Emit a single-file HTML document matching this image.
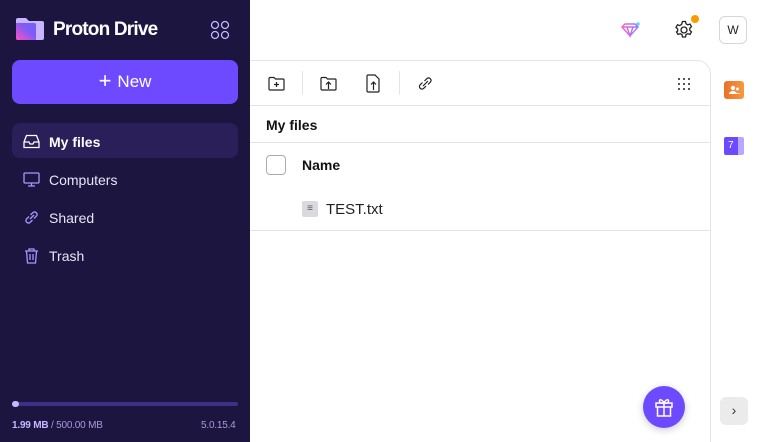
<!DOCTYPE html>
<html style="width:757px;height:442px;overflow:hidden"><head><meta charset="utf-8"><style>
*{margin:0;padding:0;box-sizing:border-box}
body{width:757px;height:442px;overflow:hidden;font-family:"Liberation Sans",sans-serif;background:#fff;position:relative}
.sb{position:absolute;left:0;top:0;width:250px;height:442px;background:#1c1540;color:#fff}
.abs{position:absolute}
.nav{position:absolute;left:12px;width:226px;height:35px;border-radius:8px;display:flex;align-items:center;font-size:14px;color:#e8e6f5;padding-top:2px}
.nav svg{margin-left:11px;margin-right:9px}
.tb svg{position:absolute}
</style></head><body>
<div class="sb">
  <svg class="abs" style="left:16px;top:18px" width="28" height="22" viewBox="0 0 28 22">
    <defs><linearGradient id="g1" x1="0" y1="1" x2="1" y2="0"><stop offset="0" stop-color="#ff50c3"/><stop offset="0.6" stop-color="#7b5cf6"/></linearGradient></defs>
    <path d="M2 0h8l3 3h13a2 2 0 0 1 2 2v15a2 2 0 0 1-2 2H2a2 2 0 0 1-2-2V2a2 2 0 0 1 2-2z" fill="#c8b4ff"/>
    <path d="M0 5h18a2 2 0 0 1 2 2v15H2a2 2 0 0 1-2-2z" fill="url(#g1)"/>
  </svg>
  <div class="abs" style="left:53px;top:19px;font-size:19px;font-weight:bold;letter-spacing:-0.8px;color:#fff">Proton Drive</div>
  <svg class="abs" style="left:210px;top:20px" width="20" height="20" viewBox="0 0 20 20" fill="none" stroke="#c6b8ff" stroke-width="1.3"><circle cx="5" cy="5" r="3.5"/><circle cx="15" cy="5" r="3.5"/><circle cx="5" cy="15" r="3.5"/><circle cx="15" cy="15" r="3.5"/></svg>
  <div class="abs" style="left:12px;top:60px;width:226px;height:44px;background:#6d4aff;border-radius:8px;display:flex;align-items:center;justify-content:center;font-size:17px;color:#fff"><span style="font-size:22px;font-weight:300;margin-right:6px;margin-top:-3px">+</span>New</div>
  <div class="nav" style="top:123px;background:#2b1f5a;font-weight:bold;color:#fff"><svg width="17" height="15" viewBox="0 0 17 15" fill="none" stroke="#fff" stroke-width="1.3"><path d="M1 8l2.5-6.5h10L16 8v5.5H1z M1 8h5l1 2h3l1-2h5"/></svg>My files</div>
  <div class="nav" style="top:161px"><svg width="17" height="15" viewBox="0 0 17 15" fill="none" stroke="#a996ff" stroke-width="1.3"><rect x="1" y="1" width="15" height="10" rx="1"/><path d="M8.5 11v3M5 14h7"/></svg>Computers</div>
  <div class="nav" style="top:199px"><svg width="17" height="15" viewBox="0 0 17 15" fill="none" stroke="#a996ff" stroke-width="1.3"><path d="M7 9l4-4M6 6.5L3.5 9a2.5 2.5 0 0 0 3.5 3.5L9.5 10M11 8.5L13.5 6A2.5 2.5 0 0 0 10 2.5L7.5 5"/></svg>Shared</div>
  <div class="nav" style="top:237px"><svg width="17" height="16" viewBox="0 0 17 16" fill="none" stroke="#a996ff" stroke-width="1.3"><path d="M2 3h13M6 3V1h5v2M3.5 3l1 12h8l1-12M7 6v6M10 6v6"/></svg>Trash</div>
  <div class="abs" style="left:12px;top:402px;width:226px;height:4px;border-radius:2px;background:#3f2f86"></div>
  <div class="abs" style="left:12px;top:401px;width:7px;height:6px;border-radius:3px;background:#c6b8ff"></div>
  <div class="abs" style="left:12px;top:420px;font-size:10px;color:#a99ad8;letter-spacing:-0.2px"><b style="color:#c6b8ff">1.99 MB</b> / 500.00 MB</div>
  <div class="abs" style="left:201px;top:420px;font-size:10px;color:#a99ad8;letter-spacing:-0.2px">5.0.15.4</div>
</div>
<svg class="abs" style="left:620px;top:22px" width="22" height="16" viewBox="0 0 22 16" fill="none"><defs><linearGradient id="g2" x1="0" y1="0" x2="1" y2="0"><stop offset="0" stop-color="#ff5fc7"/><stop offset="1" stop-color="#8a7cff"/></linearGradient></defs><path d="M2 5l3-3h10l3 3-8 9z M2 5h16 M7 5l3 9 3-9" stroke="url(#g2)" stroke-width="1.4"/><path d="M18 0v4M16 2h4" stroke="#4fc3ff" stroke-width="1.2"/></svg>
<svg class="abs" style="left:674px;top:20px" width="20" height="20" viewBox="0 0 20 20" fill="none" stroke="#222" stroke-width="1.3"><circle cx="10" cy="10" r="3"/><path d="M8.5 1.5h3l.5 2.3 1.8 1 2.2-.8 1.5 2.6-1.7 1.6v2.1l1.7 1.6-1.5 2.6-2.2-.8-1.8 1-.5 2.3h-3l-.5-2.3-1.8-1-2.2.8-1.5-2.6L3.7 11V9L2 7.4l1.5-2.6 2.2.8 1.8-1z"/></svg>
<div class="abs" style="left:691px;top:15px;width:8px;height:8px;border-radius:50%;background:#ff9900"></div>
<div class="abs" style="left:719px;top:16px;width:28px;height:28px;border:1px solid #d6d6d6;border-radius:6px;font-size:12px;display:flex;align-items:center;justify-content:center;color:#222">W</div>
<div class="abs" style="left:250px;top:60px;width:461px;height:382px;border-top:1px solid #e5e5e5;border-right:1px solid #e5e5e5;border-top-right-radius:14px"></div>
<div class="tb">
<svg style="left:268px;top:76px" width="17" height="15" viewBox="0 0 17 15" fill="none" stroke="#222" stroke-width="1.2"><path d="M1 2.5a1 1 0 0 1 1-1h4l1.5 1.5H15a1 1 0 0 1 1 1V13a1 1 0 0 1-1 1H2a1 1 0 0 1-1-1z M8.5 6v5M6 8.5h5"/></svg>
<div class="abs" style="left:302px;top:71px;width:1px;height:24px;background:#e5e5e5"></div>
<svg style="left:320px;top:76px" width="17" height="15" viewBox="0 0 17 15" fill="none" stroke="#222" stroke-width="1.2"><path d="M1 2.5a1 1 0 0 1 1-1h4l1.5 1.5H15a1 1 0 0 1 1 1V13a1 1 0 0 1-1 1H2a1 1 0 0 1-1-1z M8.5 13V6M6 8.5l2.5-2.5 2.5 2.5"/></svg>
<svg style="left:366px;top:74px" width="15" height="19" viewBox="0 0 15 19" fill="none" stroke="#222" stroke-width="1.2"><path d="M1 2a1 1 0 0 1 1-1h7l4 4v12a1 1 0 0 1-1 1H2a1 1 0 0 1-1-1z M7.5 16V8M5 10.5l2.5-2.5 2.5 2.5"/></svg>
<div class="abs" style="left:399px;top:71px;width:1px;height:24px;background:#e5e5e5"></div>
<svg style="left:417px;top:75px" width="17" height="17" viewBox="0 0 17 17" fill="none" stroke="#222" stroke-width="1.2"><path d="M6 11l5-5M5.5 7.5L3 10a2.5 2.5 0 0 0 3.5 3.5L9 11M11 9.5L13.5 7A2.5 2.5 0 0 0 10 3.5L7.5 6"/></svg>
<svg style="left:677px;top:77px" width="14" height="14" viewBox="0 0 14 14" fill="#222"><circle cx="2" cy="2" r="1"/><circle cx="7" cy="2" r="1"/><circle cx="12" cy="2" r="1"/><circle cx="2" cy="7" r="1"/><circle cx="7" cy="7" r="1"/><circle cx="12" cy="7" r="1"/><circle cx="2" cy="12" r="1"/><circle cx="7" cy="12" r="1"/><circle cx="12" cy="12" r="1"/></svg>
</div>
<div class="abs" style="left:250px;top:105px;width:460px;height:1px;background:#e5e5e5"></div>
<div class="abs" style="left:266px;top:117px;font-size:14px;font-weight:bold;color:#111">My files</div>
<div class="abs" style="left:250px;top:142px;width:460px;height:1px;background:#e5e5e5"></div>
<div class="abs" style="left:266px;top:155px;width:20px;height:20px;border:1px solid #aaa;border-radius:4px"></div>
<div class="abs" style="left:302px;top:157px;font-size:14px;font-weight:bold;color:#111">Name</div>
<div class="abs" style="left:302px;top:201px;width:16px;height:16px;background:#dadade;border-radius:2px;font-size:10px;color:#555;text-align:center;line-height:16px">≡</div>
<div class="abs" style="left:326px;top:201px;font-size:15px;color:#222">TEST.txt</div>
<div class="abs" style="left:250px;top:230px;width:460px;height:1px;background:#e5e5e5"></div>
<div class="abs" style="left:724px;top:81px;width:20px;height:18px;border-radius:3px;background:linear-gradient(90deg,#e8702a,#f79a3e)"><svg width="20" height="18" viewBox="0 0 20 18" fill="#fff"><circle cx="9" cy="7" r="2.2"/><path d="M5 13a4 3 0 0 1 8 0z"/><circle cx="13.5" cy="8" r="1.5"/><path d="M12 13a3 2.5 0 0 1 4.5 0z"/></svg></div>
<div class="abs" style="left:724px;top:137px;width:20px;height:18px;border-radius:2px;background:linear-gradient(90deg,#6d4aff 70%,#b9a8ff 70%);color:#fff;font-size:10px;line-height:18px;padding-left:4px">7</div>
<div class="abs" style="left:643px;top:386px;width:42px;height:42px;border-radius:50%;background:#6d4aff;box-shadow:0 2px 8px rgba(0,0,0,.2)"><svg style="position:absolute;left:11px;top:10px" width="20" height="22" viewBox="0 0 20 22" fill="none" stroke="#fff" stroke-width="1.5"><rect x="2" y="7" width="16" height="4"/><path d="M3.5 11v9h13v-9M10 7v13M10 7C8 3 5 3 5.5 5.5S10 7 10 7zM10 7c2-4 5-4 4.5-1.5S10 7 10 7z"/></svg></div>
<div class="abs" style="left:720px;top:397px;width:28px;height:28px;border-radius:6px;background:#ebebeb;font-size:14px;color:#333;text-align:center;line-height:27px">›</div>
</body></html>
